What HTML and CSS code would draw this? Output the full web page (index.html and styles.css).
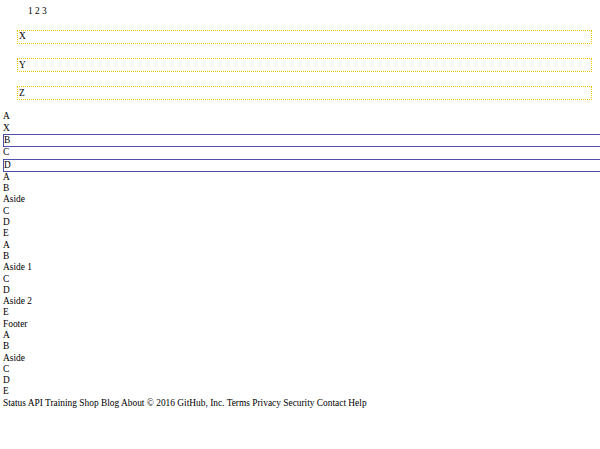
FILE: index.html
```html
<!DOCTYPE html>
<html>
<head>
<meta charset="utf-8">
<link rel="stylesheet" href="styles.css">
</head>
<body>
<div class="nums">1 2 3</div>
<div class="boxes">
  <div class="ybox">X</div>
  <div class="ybox">Y</div>
  <div class="ybox">Z</div>
</div>
<div class="flow">
  <div>A</div>
  <div>X</div>
  <div class="bbox">B</div>
  <div>C</div>
  <div class="bbox">D</div>
  <div>A</div>
  <div>B</div>
  <div>Aside</div>
  <div>C</div>
  <div>D</div>
  <div>E</div>
  <div>A</div>
  <div>B</div>
  <div>Aside 1</div>
  <div>C</div>
  <div>D</div>
  <div>Aside 2</div>
  <div>E</div>
  <div>Footer</div>
  <div>A</div>
  <div>B</div>
  <div>Aside</div>
  <div>C</div>
  <div>D</div>
  <div>E</div>
  <div>Status API Training Shop Blog About © 2016 GitHub, Inc. Terms Privacy Security Contact Help</div>
</div>
</body>
</html>
```
FILE: styles.css
```css
html, body {
  overflow-x: hidden;
}
body {
  margin: 0;
  padding: 6px 0 0 3px;
  font-family: "Liberation Serif", "Times New Roman", serif;
  font-size: 9.4px;
  line-height: 11.3px;
  color: #000;
  background: #fff;
}
.nums {
  padding-left: 25px;
}
.boxes {
  display: flex;
  flex-direction: column;
  gap: 14.4px;
  margin: 12.7px 8px 0 14px;
}
.ybox {
  border: 1px dotted #f0c400;
  padding: 0.5px 0 0 1px;
}
.flow {
  margin-top: 11.2px;
}
.bbox {
  border: 1px solid #5050ac;
  width: 620px;
}
```
